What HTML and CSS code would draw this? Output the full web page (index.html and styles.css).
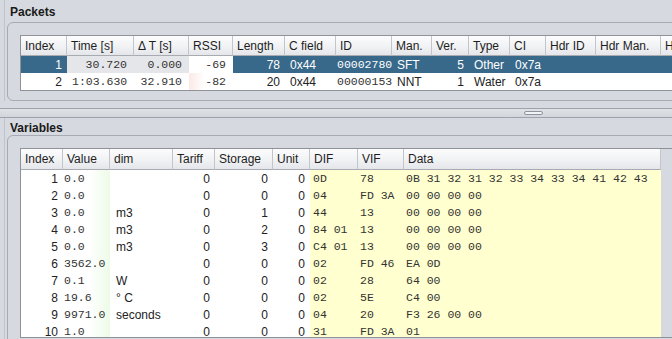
FILE: index.html
```html
<!DOCTYPE html>
<html>
    <head>
        <title>Packets</title>
        <link rel="stylesheet" href="styles.css">
    </head>
    <body>
        <div class="section">
            <div class="title">Packets</div>
            <div class="panel">
                <div class="pane">
                    <table class="grid packets">
                        <thead>
                            <tr>
                                <th class="p-index">Index</th>
                                <th class="p-time">Time [s]</th>
                                <th class="p-delta">&Delta; T [s]</th>
                                <th class="p-rssi">RSSI</th>
                                <th class="p-length">Length</th>
                                <th class="p-cfield">C field</th>
                                <th class="p-id">ID</th>
                                <th class="p-man">Man.</th>
                                <th class="p-ver">Ver.</th>
                                <th class="p-type">Type</th>
                                <th class="p-ci">CI</th>
                                <th class="p-hdrid">Hdr ID</th>
                                <th class="p-hdrman">Hdr Man.</th>
                                <th class="p-hdrver">Hdr Ver.</th>
                            </tr>
                        </thead>
                        <tbody>
                            <tr class="sel">
                                <td class="num">1</td>
                                <td class="num mono pad keep">30.720</td>
                                <td class="num mono pad keep">0.000</td>
                                <td class="num mono pad rssi">-69</td>
                                <td class="num">78</td>
                                <td>0x44</td>
                                <td class="mono tight">00002780</td>
                                <td>SFT</td>
                                <td class="num">5</td>
                                <td>Other</td>
                                <td>0x7a</td>
                                <td></td>
                                <td></td>
                                <td></td>
                            </tr>
                            <tr>
                                <td class="num">2</td>
                                <td class="num mono pad">1:03.630</td>
                                <td class="num mono pad">32.910</td>
                                <td class="num mono pad weak">-82</td>
                                <td class="num">20</td>
                                <td>0x44</td>
                                <td class="mono tight">00000153</td>
                                <td>NNT</td>
                                <td class="num">1</td>
                                <td>Water</td>
                                <td>0x7a</td>
                                <td></td>
                                <td></td>
                                <td></td>
                            </tr>
                        </tbody>
                    </table>
                </div>
            </div>
        </div>

        <div class="splitter"><div class="grip"></div></div>

        <div class="section">
            <div class="title short">Variables</div>
            <div class="panel">
                <div class="pane tall">
                    <table class="grid vars">
                        <thead>
                            <tr>
                                <th class="v-index">Index</th>
                                <th class="v-value">Value</th>
                                <th class="v-dim">dim</th>
                                <th class="v-tariff">Tariff</th>
                                <th class="v-storage">Storage</th>
                                <th class="v-unit">Unit</th>
                                <th class="v-dif">DIF</th>
                                <th class="v-vif">VIF</th>
                                <th class="v-data">Data</th>
                            </tr>
                        </thead>
                        <tbody id="vars"></tbody>
                    </table>
                </div>
            </div>
        </div>

        <script>
            const rows = [
                ['0.0', '', 0, 0, 0, '0D', '78', '0B 31 32 31 32 33 34 33 34 41 42 43'],
                ['0.0', '', 0, 0, 0, '04', 'FD 3A', '00 00 00 00'],
                ['0.0', 'm3', 0, 1, 0, '44', '13', '00 00 00 00'],
                ['0.0', 'm3', 0, 2, 0, '84 01', '13', '00 00 00 00'],
                ['0.0', 'm3', 0, 3, 0, 'C4 01', '13', '00 00 00 00'],
                ['3562.0', '', 0, 0, 0, '02', 'FD 46', 'EA 0D'],
                ['0.1', 'W', 0, 0, 0, '02', '28', '64 00'],
                ['19.6', '° C', 0, 0, 0, '02', '5E', 'C4 00'],
                ['9971.0', 'seconds', 0, 0, 0, '04', '20', 'F3 26 00 00'],
                ['1.0', '', 0, 0, 0, '31', 'FD 3A', '01']
            ];
            let allRows = '';
            for (let i = 0; i < rows.length; i++) {
                const r = rows[i];
                allRows +=
                `<tr>
                    <td class="num">${i + 1}</td>
                    <td class="mono val">${r[0]}</td>
                    <td class="dim">${r[1]}</td>
                    <td class="num">${r[2]}</td>
                    <td class="num">${r[3]}</td>
                    <td class="num">${r[4]}</td>
                    <td class="mono hex dif">${r[5]}</td>
                    <td class="mono hex">${r[6]}</td>
                    <td class="mono hex">${r[7]}</td>
                </tr>`;
            }
            document.getElementById('vars').innerHTML = allRows;
        </script>
    </body>
</html>
```

FILE: styles.css
```css
html, body{
    margin: 0;
    overflow: hidden;
}
body{
    width: 672px;
    height: 339px;
    background: #d6d9df;
    font-family: "Liberation Sans", Arial, sans-serif;
    font-size: 12px;
    color: #1e1e1e;
}
.section{
    margin-left: 4px;
    border-left: 1px solid #bfc3ca;
}
.title{
    height: 22px;
    box-sizing: border-box;
    padding: 5px 0 0 5px;
    line-height: 14px;
    font-weight: bold;
    color: #1a1a1a;
}
.title.short{
    height: 17px;
    padding-top: 3px;
}
.panel{
    margin-left: 2px;
    width: 760px;
    border: 1px solid #a6aab2;
    border-radius: 6px;
    padding: 12px 0 9px 12px;
}
.pane{
    border: 1px solid #8e9299;
    background: #d6d9df;
    overflow: hidden;
}
.pane.tall{
    height: 188px;
}
.grid{
    border-collapse: separate;
    border-spacing: 0;
    table-layout: fixed;
    font-size: 12px;
    line-height: 14px;
}
.packets{
    width: 747px;
}
.vars{
    width: 640px;
}
th, td{
    box-sizing: border-box;
    white-space: nowrap;
    overflow: hidden;
}
th{
    height: 20px;
    padding: 0 4px;
    text-align: left;
    font-weight: normal;
    color: #1e1e1e;
    background: linear-gradient(#fcfcfd, #f1f2f4 55%, #e4e6ea);
    border-right: 1px solid #c2c5cb;
    border-bottom: 1px solid #a8abb1;
}
.vars th{
    height: 21px;
}
td{
    height: 17px;
    padding: 0 5px;
    background: #fff;
    color: #222;
}
.num{
    text-align: right;
}
.mono{
    font-family: "Liberation Mono", "Courier New", monospace;
    font-size: 11.5px;
    color: #333;
}
.pad{
    padding-right: 7px;
}
.tight{
    padding: 0 0 0 1px;
}
.sel td{
    background: #39698a;
    color: #fff;
}
.sel td.keep{
    background: #e5e6e9;
    color: #333;
}
.sel td.rssi{
    background: #fff;
    color: #333;
}
td.weak{
    background: linear-gradient(to right, #fbe9e6, #fff 35%);
}
.dim{
    padding-left: 6px;
}
.val{
    padding-left: 1px;
    background: linear-gradient(to right, #fff 55%, #edfbe8);
}
.hex{
    padding-left: 2px;
    background: #ffffcf;
}
.dif{
    padding-left: 3px;
}

.p-index{ width: 46px; }
.p-time{ width: 67px; }
.p-delta{ width: 55px; }
.p-rssi{ width: 44px; }
.p-length{ width: 52px; }
.p-cfield{ width: 51px; }
.p-id{ width: 56px; }
.p-man{ width: 40px; }
.p-ver{ width: 37px; }
.p-type{ width: 41px; }
.p-ci{ width: 36px; }
.p-hdrid{ width: 50px; }
.p-hdrman{ width: 65px; }
.p-hdrver{ width: 107px; }

.v-index{ width: 42px; }
.v-value{ width: 47px; }
.v-dim{ width: 63px; }
.v-tariff{ width: 42px; }
.v-storage{ width: 58px; }
.v-unit{ width: 37px; }
.v-dif{ width: 48px; }
.v-vif{ width: 46px; }
.v-data{ width: 257px; }

.splitter{
    margin-top: 7px;
    height: 8px;
    border-top: 1px solid #9ea2aa;
    border-bottom: 1px solid #9ea2aa;
    background: linear-gradient(#dfe2e7, #d2d5db);
}
.grip{
    margin: 2px 0 0 524px;
    width: 17px;
    height: 2px;
    border: 1px solid #8f939b;
    border-radius: 2px;
    background: #f2f3f5;
}
```
